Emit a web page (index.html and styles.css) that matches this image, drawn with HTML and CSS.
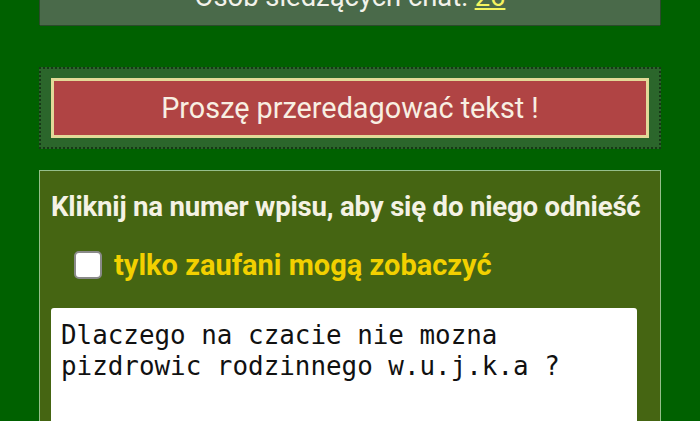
FILE: index.html
```html
<!DOCTYPE html>
<html lang="pl">
<head>
<meta charset="utf-8">
<link rel="stylesheet" href="styles.css">
</head>
<body>
<div class="page">
  <div class="online">Osób siedzących chat: <a class="count" href="#">26</a></div>
  <div class="alert-wrap">
    <div class="alert">Proszę przeredagować tekst !</div>
  </div>
  <form class="post">
    <div class="hint">Kliknij na numer wpisu, aby się do niego odnieść</div>
    <label class="trusted"><span class="box"></span><span>tylko zaufani mogą zobaczyć</span></label>
    <div class="text">Dlaczego na czacie nie mozna
pizdrowic rodzinnego w.u.j.k.a ?</div>
  </form>
</div>
</body>
</html>
```
FILE: styles.css
```css
html, body {
  margin: 0;
  padding: 0;
  background: #006100;
  overflow: hidden;
  height: 421px;
}
.page {
  padding: 0 39px;
  font-family: Roboto, "Liberation Sans", sans-serif;
}
.online {
  margin-top: -30px;
  height: 55px;
  box-sizing: border-box;
  padding-top: 12px;
  background: #4a6a4a;
  margin-left: 1px;
  margin-right: 1px;
  box-shadow: 0 1px 0 #2c4a2c, -1px 0 0 #2c4a2c, 1px 0 0 #2c4a2c;
  color: #f2f2ea;
  font-size: 27.4px;
  line-height: 30px;
  text-align: center;
}
.count {
  color: #f4f460;
  text-decoration: underline;
}
.alert-wrap {
  margin-top: 42px;
  border: 2px dotted #173817;
  background: #2b662b;
  padding: 9px 10px;
}
.alert {
  height: 60px;
  box-sizing: border-box;
  border: 3px solid #e2da98;
  background: #b04444;
  color: #f8efe2;
  font-size: 28.8px;
  display: flex;
  align-items: center;
  justify-content: center;
}
.post {
  margin: 21px 0 0;
  border: 1px solid #95bf8a;
  background: #456512;
  padding: 20px 23px 0 11px;
  height: 300px;
}
.hint {
  color: #f4f2e4;
  font-weight: bold;
  font-size: 27.6px;
  line-height: 32px;
  letter-spacing: -0.2px;
  white-space: nowrap;
}
.trusted {
  display: flex;
  align-items: center;
  gap: 12px;
  margin: 27px 0 0 23px;
  color: #f2d000;
  font-weight: bold;
  font-size: 29px;
  line-height: 30px;
}
.box {
  width: 24px;
  height: 24px;
  background: #fff;
  border: 2px solid #8a8a8a;
  border-radius: 5px;
}
.text {
  margin-top: 28px;
  background: #fff;
  border-radius: 3px;
  padding: 12px 10px;
  height: 200px;
  font-family: "DejaVu Sans Mono", monospace;
  font-size: 25.9px;
  line-height: 31px;
  color: #111;
  white-space: pre;
}
```
